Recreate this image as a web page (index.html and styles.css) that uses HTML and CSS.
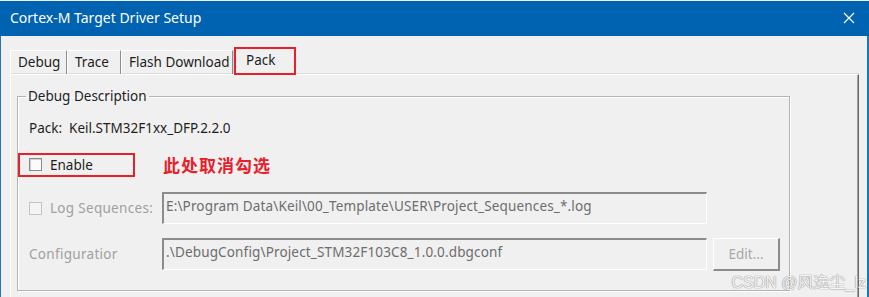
FILE: index.html
```html
<html>
<head>
    <link rel="stylesheet" href="styles.css">
</head>
<body>
    <div class="window">
        <div class="titlebar">
            <span class="title">Cortex-M Target Driver Setup</span>
            <svg class="close" width="12" height="12" viewBox="0 0 12 12">
                <path d="M1 1 L11 11 M11 1 L1 11" stroke="#ffffff" stroke-width="1.2" fill="none" />
            </svg>
        </div>
        <div class="client">
            <div class="tabs">
                <div class="tab debug">Debug</div>
                <div class="tab trace">Trace</div>
                <div class="tab flash">Flash Download</div>
                <div class="tab active">Pack</div>
            </div>
            <div class="panel">
                <fieldset class="group">
                    <legend>Debug Description</legend>
                    <div class="pack-row">Pack:&nbsp;&nbsp;Keil.STM32F1xx_DFP.2.2.0</div>
                    <div class="enable-row">
                        <span class="mark">
                            <span class="check"></span>
                            <span>Enable</span>
                        </span>
                        <span class="note">此处取消勾选</span>
                    </div>
                    <div class="field-row">
                        <label class="field-label"><span class="check off"></span>Log Sequences:</label>
                        <div class="field">E:\Program Data\Keil\00_Template\USER\Project_Sequences_*.log</div>
                    </div>
                    <div class="field-row">
                        <label class="field-label">Configuratior</label>
                        <div class="field">.\DebugConfig\Project_STM32F103C8_1.0.0.dbgconf</div>
                        <div class="button">Edit...</div>
                    </div>
                </fieldset>
            </div>
            <div class="watermark">CSDN @风逸尘_lz</div>
        </div>
    </div>
</body>
</html>
```

FILE: styles.css
```css
body {
    margin: 0;
    background-color: #f0f0f0;
    font-family: "Noto Sans", "Noto Sans CJK SC", sans-serif;
}

.window {
    width: 869px;
    height: 297px;
    overflow: hidden;
    background-color: #f0f0f0;
}

.titlebar {
    height: 35px;
    margin-top: 1px;
    background-color: #0063b1;
    display: flex;
    align-items: center;
    justify-content: space-between;
    padding: 0 14px 0 10px;
}

.title {
    color: #ffffff;
    font-size: 14px;
    margin-top: -2px;
}

.close {
    margin-top: -1px;
}

.client {
    position: relative;
    height: 261px;
    border-left: 1px solid #1e73be;
    border-right: 2px solid #1e73be;
    padding-top: 12px;
    box-sizing: border-box;
}

.tabs {
    display: flex;
    align-items: flex-end;
    height: 26px;
    margin-left: 9px;
    font-size: 13.5px;
    color: #1e1e1e;
}

.tab {
    height: 24px;
    line-height: 22px;
    padding: 0 0 0 7px;
    box-sizing: border-box;
    white-space: nowrap;
    border-top: 1px solid #ffffff;
    border-left: 1px solid #ffffff;
    border-right: 1px solid #8c8c8c;
    box-shadow: 1px 0 0 #d4d4d4;
}

.tab.debug { width: 57px; }
.tab.trace { width: 54px; }
.tab.flash { width: 112px; }

.tab.active {
    position: relative;
    z-index: 1;
    width: 62px;
    height: 28px;
    line-height: 22px;
    margin-left: 1px;
    margin-bottom: -1px;
    background-color: #f0f0f0;
    border: 2px solid #e8202a;
    padding: 0 0 0 10px;
    box-shadow: none;
}

.panel {
    margin-left: 9px;
    width: 849px;
    height: 230px;
    box-sizing: border-box;
    border-top: 1px solid #ffffff;
    border-left: 1px solid #ffffff;
    border-right: 1px solid #696969;
    box-shadow: inset -1px 0 0 #a0a0a0, 0 -1px 0 #dadada;
    padding: 12px 0 0 6px;
}

.group {
    width: 773px;
    height: 204px;
    box-sizing: border-box;
    margin: 0;
    padding: 0 0 0 11px;
    border: 1px solid #b4b4b4;
    box-shadow: inset 1px 1px 0 #ffffff, 1px 1px 0 #ffffff;
    font-size: 13.5px;
    color: #1e1e1e;
}

.group legend {
    padding: 0 2px;
    margin-left: -3px;
    line-height: 18px;
}

.pack-row {
    margin-top: 14px;
    line-height: 18px;
}

.enable-row {
    display: flex;
    align-items: center;
    margin-top: 15px;
    margin-left: -11px;
}

.mark {
    display: flex;
    align-items: center;
    width: 104px;
    height: 20px;
    border: 2px solid #e8202a;
    padding-left: 9px;
}

.check {
    display: inline-block;
    width: 11px;
    height: 11px;
    border: 1px solid #8a8a8a;
    box-shadow: inset 1px 1px 0 #d0d0d0;
    background-color: #fbfbfb;
    margin-right: 8px;
}

.check.off {
    border-color: #c4c4c4;
    background-color: #f4f4f4;
    box-shadow: none;
}

.note {
    margin-left: 28px;
    color: #e8202a;
    font-weight: bold;
    font-size: 17px;
    letter-spacing: 1px;
}

.field-row {
    display: grid;
    grid-template-columns: 127px 545px 67px;
    column-gap: 6px;
    margin-top: 15px;
}

.field-row + .field-row {
    margin-top: 14px;
}

.field-label {
    display: flex;
    align-items: center;
    height: 32px;
    color: #a0a0a0;
    letter-spacing: 0.3px;
    white-space: nowrap;
}

.field {
    height: 32px;
    box-sizing: border-box;
    border-top: 2px solid #8c8c8c;
    border-left: 2px solid #8c8c8c;
    border-right: 1px solid #ffffff;
    border-bottom: 1px solid #ffffff;
    padding: 2px 0 0 2px;
    color: #6d6d6d;
    line-height: 20px;
    letter-spacing: 0.15px;
}

.button {
    height: 33px;
    box-sizing: border-box;
    border-top: 1px solid #ffffff;
    border-left: 1px solid #ffffff;
    border-right: 2px solid #8c8c8c;
    border-bottom: 2px solid #8c8c8c;
    color: #a8a8a8;
    text-align: center;
    line-height: 30px;
}

.watermark {
    position: absolute;
    right: 1px;
    bottom: 4px;
    font-family: "Liberation Sans", "Noto Sans CJK SC", sans-serif;
    font-size: 16px;
    color: #f4f4f4;
    text-shadow: 0 0 1px #8a8a8a, 0 0 1px #8a8a8a;
}
```
